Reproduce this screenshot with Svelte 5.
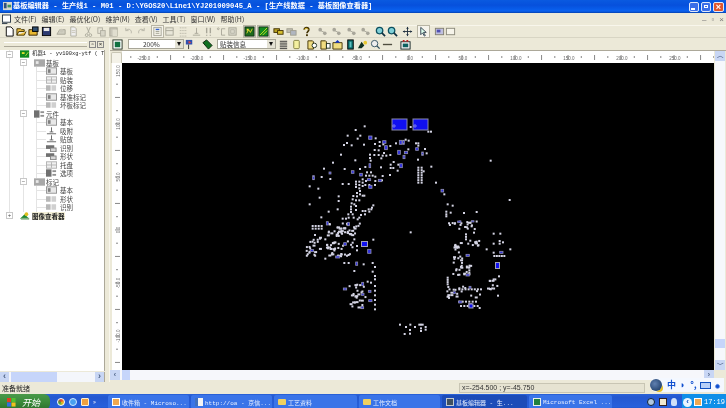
<script>
	// toolbar icon shapes, 12x12
	const shapes = {
		doc: '<path d="M2.5 1h5l2.5 2.500V11h-7.500z" fill="#fff" stroke="#000"/>',
		open: '<path d="M1 10V3h4l1 1h3v2H3l-2 4h8l2-4" fill="#f0c040" stroke="#403000"/>',
		saveall: '<path d="M1 10V4h3l1 1h5v5z" fill="#e8b830" stroke="#302000"/><rect x="5" y="1" width="6" height="5" fill="#305070" stroke="#000"/>',
		save: '<rect x="1.500" y="1.500" width="9" height="9" fill="#2c3a70" stroke="#000"/><rect x="3" y="2" width="6" height="3.500" fill="#e8e8e8"/>',
		gdoc: '<path d="M3 1h4l2 2v8H3z" fill="#eee" stroke="#b0aea0"/><path d="M4 5h4M4 7h4" stroke="#c8c6b8"/>',
		gprint: '<path d="M1 9l3-5h6v5z" fill="#d0cec0" stroke="#a8a698"/><circle cx="6" cy="5" r="2" fill="#c8c6b8"/>',
		gcut: '<path d="M4 1l3 7M8 1L5 8" stroke="#aaa89a"/><circle cx="4" cy="10" r="1.500" fill="none" stroke="#aaa89a"/><circle cx="8" cy="10" r="1.500" fill="none" stroke="#aaa89a"/>',
		gcopy: '<rect x="2" y="2" width="5" height="6" fill="#e8e6d8" stroke="#b0aea0"/><rect x="5" y="5" width="5" height="6" fill="#d8d6c8" stroke="#b0aea0"/>',
		gpaste: '<rect x="2" y="2" width="8" height="9" fill="#c8c6b8" stroke="#a8a698"/><rect x="5" y="4" width="5" height="7" fill="#e0decf"/>',
		gundo: '<path d="M3 5c3-3 7-1 6 3M3 2v3h3" fill="none" stroke="#b8b6a8"/>',
		gredo: '<path d="M9 5C6 2 2 4 3 8M9 2v3H6" fill="none" stroke="#b8b6a8"/>',
		panel: '<rect x="2" y="1.500" width="8" height="9" fill="#f4f2e8" stroke="#a8a698"/><rect x="4" y="3" width="4" height="1.500" fill="#3060d0"/><path d="M4 6h4M4 8h4" stroke="#a0a090"/>',
		gpanel: '<rect x="2" y="2" width="8" height="8" fill="#e8e6d8" stroke="#a8a698"/><path d="M2 5h8" stroke="#a8a698"/>',
		ggrid: '<path d="M2 2h8M2 5h8M2 8h8M2 11h8" stroke="#a8a698" stroke-dasharray="1 1"/>',
		gpin: '<path d="M6 2v6M2 10h8M4 8h4" stroke="#a8a698"/>',
		gbang: '<path d="M4 2v6M8 2v6M4 9.500v1M8 9.500v1" stroke="#a8a698" stroke-width="1.500"/>',
		gdeg: '<circle cx="2.500" cy="3" r="1" fill="none" stroke="#a8a698"/><path d="M10 3H6v7h4" fill="none" stroke="#a8a698"/>',
		gchip: '<rect x="2" y="2" width="8" height="8" fill="#dad8ca" stroke="#a8a698"/><path d="M4 4h4v4H4z" fill="none" stroke="#b8b6a8"/>',
		board: '<rect x="1" y="1" width="10" height="10" fill="#1c6a1c" stroke="#102810"/><path d="M3 8l2-4 2 3 2-4" fill="none" stroke="#e8d830"/><rect x="3" y="3" width="2" height="2" fill="#f0e040"/>',
		board2: '<rect x="1" y="1" width="10" height="10" fill="#148a20" stroke="#102810"/><path d="M2 10l8-8M5 10l5-5" stroke="#c8e020"/>',
		chips: '<rect x="1" y="3" width="6" height="4" fill="#b8a020" stroke="#403000"/><rect x="5" y="5" width="6" height="4" fill="#d8c030" stroke="#403000"/>',
		gchips: '<rect x="1" y="3" width="6" height="4" fill="#c0beb0" stroke="#a09e90"/><rect x="5" y="5" width="6" height="5" fill="#b0b6c0" stroke="#a09e90"/>',
		help: '<path d="M3.500 4c0-3 5-3 5 0 0 2-2 2-2 4" fill="none" stroke="#403000" stroke-width="1.800"/><rect x="5.500" y="9" width="2" height="2" fill="#403000"/><path d="M4 4c0-2 3-2 4 0" fill="none" stroke="#e8c830"/>',
		gcon: '<circle cx="3.500" cy="4" r="2" fill="#a8a69a"/><circle cx="8.500" cy="8" r="2" fill="#a8a69a"/><path d="M4 5l4 2" stroke="#a8a69a"/>',
		zoomin: '<circle cx="5" cy="5" r="3.500" fill="#80d0d8" stroke="#0c5060" stroke-width="1.400"/><path d="M7.500 7.500L11 11" stroke="#103040" stroke-width="1.800"/>',
		move: '<path d="M6 1v10M1 6h10" stroke="#203040"/><path d="M6 1L4.500 3h3zM6 11L4.500 9h3zM1 6l2-1.500v3zM11 6L9 4.500v3z" fill="#203040"/>',
		arrow: '<path d="M3 1.500v8l2-2 2 3.500 1-.6-2-3.400h3z" fill="#dfe" stroke="#304050"/>',
		rectblue: '<rect x="1.500" y="2.500" width="9" height="7" fill="#c0c0e0" stroke="#807e70"/><rect x="3" y="4" width="4" height="3" fill="#5050b0"/>',
		rect: '<rect x="1.500" y="2.500" width="9" height="7" fill="#f6f4ea" stroke="#8a887a"/>',
		film: '<rect x="1" y="1" width="10" height="10" fill="#fff" stroke="#203020"/><rect x="3" y="3" width="6" height="6" fill="#107040"/>',
		rows: '<path d="M2 2.500h8M2 4.500h8M2 6.500h8M2 8.500h8M2 10.500h8" stroke="#303030"/>',
		cyl: '<rect x="3" y="1.500" width="6" height="9" rx="1" fill="#f4f0a0" stroke="#807e40"/>',
		fold1: '<path d="M1 2h5l1 1v8H1z" fill="#f0dc80" stroke="#403000"/><circle cx="8" cy="7" r="2.500" fill="#fff" stroke="#203020"/>',
		fold2: '<path d="M1 2h5l1 1v8H1z" fill="#f0dc80" stroke="#403000"/><rect x="7" y="5" width="4" height="5" fill="#fff" stroke="#203020"/>',
		fold3: '<path d="M1 4h10v7H1z" fill="#f0dc80" stroke="#403000"/><path d="M6 1l3 3H3z" fill="#1030c0"/>',
		gem: '<rect x="3" y="1" width="6" height="10" fill="#0c7070" stroke="#000"/><rect x="5" y="3" width="2" height="6" fill="#60c0c0"/>',
		chip2: '<path d="M1 10l4-7 3 4-3 3z" fill="#103020"/><circle cx="9" cy="4" r="2" fill="#e8c830"/>',
		lens: '<circle cx="5" cy="5" r="3.500" fill="#eee" stroke="#305060"/><path d="M7.500 7.500l3 3" stroke="#305060" stroke-width="1.500"/>',
		dash: '<path d="M1 6h10" stroke="#504e40" stroke-width="1.500"/>',
		pick: '<rect x="1" y="3" width="10" height="8" fill="#f4f4f4" stroke="#102020"/><rect x="3" y="5" width="6" height="4" fill="#0c6060"/><path d="M3 1h2v2H3zM7 1h2v2H7z" fill="#c02020"/>',
		flag: '<path d="M2 1h7v5H2z" fill="#3050b0"/><path d="M5 2l3 2-3 1z" fill="#e04040"/><path d="M5 6v5" stroke="#2a2a2a"/>',
		chipgreen: '<path d="M1 4l4-3 6 6-4 4z" fill="#107020" stroke="#082008"/>'
	};

	// [icon, centre x]
	const row1 = [['doc',10],['open',22],['saveall',34],['save',47],['gprint',62],['gdoc',74],['gcut',89],['gcopy',102],['gpaste',114],['gundo',129],['gredo',142],['panel',158],['gpanel',170],['ggrid',184],['gpin',197],['gbang',209],['gdeg',222],['gchip',233],['board',250],['board2',264],['chips',279],['gchips',292],['help',307],['gcon',323],['gcon',337],['gcon',352],['gcon',366],['zoomin',381],['zoomin',393],['move',408],['arrow',424],['rectblue',440],['rect',451]];
	const row2 = [['rows',283],['cyl',296],['fold1',312],['fold2',325],['fold3',337],['gem',350],['chip2',362],['lens',375],['dash',387],['pick',405]];

	function gaps(list, start) {
		let prev = start;
		return list.map(([name, x]) => {
			const left = x - 6 - prev;
			prev = x + 6;
			return { name, left };
		});
	}
	const row1Items = gaps(row1, 0);
	const row2Items = gaps(row2, 275);

	const menus = ['文件(F)', '编辑(E)', '最优化(O)', '维护(M)', '查看(V)', '工具(T)', '窗口(W)', '帮助(H)'];

	const tree = [
		{ label: '机器1 - yv100xg-ytf ( T', level: 0, icon: 'board', open: true },
		{ label: '基板', level: 1, icon: 'g', open: true },
		{ label: '基板', level: 2, icon: 'a' },
		{ label: '贴装', level: 2, icon: 'b' },
		{ label: '位移', level: 2, icon: 'c' },
		{ label: '基准标记', level: 2, icon: 'a' },
		{ label: '坏板标记', level: 2, icon: 'c' },
		{ label: '元件', level: 1, icon: 'd', open: true },
		{ label: '基本', level: 2, icon: 'a' },
		{ label: '吸附', level: 2, icon: 'e' },
		{ label: '贴放', level: 2, icon: 'e' },
		{ label: '识别', level: 2, icon: 'f' },
		{ label: '形状', level: 2, icon: 'f' },
		{ label: '托盘', level: 2, icon: 'b' },
		{ label: '选项', level: 2, icon: 'd' },
		{ label: '标记', level: 1, icon: 'g', open: true },
		{ label: '基本', level: 2, icon: 'a' },
		{ label: '形状', level: 2, icon: 'c' },
		{ label: '识别', level: 2, icon: 'c' },
		{ label: '图像查看器', level: 0, icon: 'view', open: false, selected: true }
	];
	const treeIcons = {
		board: '<rect x="0" y="0" width="10" height="8" fill="#108a20"/><rect x="2" y="2" width="3" height="2" fill="#e0e030"/><path d="M6 6l3-4" stroke="#c0e040"/>',
		view: '<path d="M0 7l5-5 5 5z" fill="#208a30"/><circle cx="7" cy="2" r="2" fill="#e0c020"/><rect x="1" y="6" width="9" height="2" fill="#80b080"/>',
		g: '<rect x="0" y="0" width="12" height="8" fill="#a8a8a8"/><rect x="2" y="2" width="3" height="3" fill="#e8e8e8"/>',
		a: '<rect x=".5" y=".5" width="11" height="7" fill="#e8e8e8" stroke="#909090"/><rect x="2" y="2" width="3" height="4" fill="#808080"/>',
		b: '<rect x=".5" y=".5" width="11" height="7" fill="#f0f0f0" stroke="#b0b0b0"/><path d="M6 1v6M1 4h10" stroke="#b0b0b0"/>',
		c: '<rect x="0" y="1" width="5" height="6" fill="#b8b8b8"/><rect x="6" y="1" width="5" height="6" fill="#d0d0d0"/>',
		d: '<rect x="0" y="0" width="6" height="8" fill="#707070"/><rect x="7" y="1" width="4" height="2" fill="#909090"/><rect x="7" y="5" width="4" height="2" fill="#909090"/>',
		e: '<path d="M6 0v5M1 7h10M4 5h4" stroke="#606060"/>',
		f: '<rect x="0" y="1" width="9" height="4" fill="#707070"/><rect x="5" y="4" width="6" height="4" fill="#d8d8d8" stroke="#808080"/>'
	};

	// rulers, in page pixels
	const xLabels = [['-250.0',144],['-200.0',197],['-150.0',250],['-100.0',303],['-50.0',357],['0.0',410],['50.0',463],['100.0',516],['150.0',569],['200.0',622],['250.0',675]];
	const xTicks = [];
	for (let x = 130.8; x < 714; x += 13.25) xTicks.push(x);
	const yLabels = [['150.0',71],['100.0',124],['50.0',177],['0.0',230],['-50.0',283],['-100.0',336]];
	const yTicks = [];
	for (let y = 84.2; y < 370; y += 13.25) yTicks.push(y);

	// board pads: coordinates read from 3x crops
	const rnd = (() => {
		let s = 4711;
		return () => (s = (s * 16807) % 2147483647) / 2147483647;
	})();
	const pads = [];
	const pts = (str, ox, oy) => {
		str.split(' ').forEach((p) => {
			const [x, y] = p.split(',').map(Number);
			pads.push({ x: ox + x / 3, y: oy + y / 3, w: 2, h: 2 });
		});
	};
	const box = (x0, y0, x1, y1, n, oy) => {
		for (let i = 0; i < n; i++) {
			pads.push({
				x: 300 + (x0 + rnd() * (x1 - x0)) / 3,
				y: oy + (y0 + rnd() * (y1 - y0)) / 3,
				w: rnd() > 0.75 ? 3 : 2,
				h: 2
			});
		}
	};
	const line = (x0, y0, x1, y1, n, oy) => {
		for (let i = 0; i < n; i++) {
			const t = n > 1 ? i / (n - 1) : 0;
			pads.push({ x: 300 + (x0 + (x1 - x0) * t) / 3, y: oy + (y0 + (y1 - y0) * t) / 3, w: 2, h: 2 });
		}
	};
	pts('164,57 191,46 140,74 178,74 170,83 224,82 129,102 138,96 152,103 189,101 120,131 163,148 96,155 131,174 69,173 62,198 88,204 26,226 52,233 56,260 26,280 83,302 110,295 61,319 113,256 113,270 125,219 143,219 222,99 236,93 236,105 247,100 268,105 285,97 314,86 323,89 322,115 233,118 221,117 249,126 268,132 256,134 245,134 241,142 207,131 207,141 220,132 233,132 209,149 278,153 269,161 269,171 277,171 292,161 290,179 240,169 267,192 345,97 352,97 352,104 372,114 377,127 351,146 391,167 405,215 430,250 440,280 455,284 449,305 436,302 436,310 436,316 489,306 527,303 569,149 626,267 368,181 177,174 193,168 198,184 210,184 195,194 205,194 215,194 223,197 245,195 243,208 223,210 195,210 175,212 175,222 175,232 185,205 185,215 185,225 165,212 165,220 165,228 193,222 205,222 222,222 177,240 177,250 168,246 185,254 190,254 157,255 168,256 155,265 165,268 175,268 152,277 160,280 150,287 150,295 150,303 165,285 165,297 185,300 193,300 203,295 211,295 217,283 213,290 205,302 180,312 175,320 142,310 155,310 125,323 135,323 143,320 158,320 170,325 192,310 329,48 382,62 390,62', 300, 110);
	pts('42,42 73,55 217,56 160,55 168,75 168,88 160,150 73,113 130,126 143,126 188,130 215,126 222,138 215,152 222,165 222,175 200,182 210,185 297,311 315,318 328,311 342,318 327,327 327,338 311,339 355,311 360,311 365,311 360,322 360,330 374,318 374,326 329,34 519,35 578,38 598,38 578,68 596,60 596,68 606,64 557,85 628,85 578,95 594,166 591,224 536,261 505,140 505,148 505,155 490,160', 300, 220);
	line(352, 170, 352, 215, 7, 110);
	line(362, 170, 362, 215, 7, 110);
	line(35, 345, 62, 345, 4, 110);
	line(35, 353, 62, 353, 4, 110);
	box(80, 5, 180, 45, 42, 220);
	box(15, 50, 60, 105, 22, 220);
	box(75, 60, 105, 105, 20, 220);
	box(110, 60, 155, 110, 18, 220);
	box(145, 190, 195, 260, 28, 220);
	line(222, 195, 222, 265, 6, 220);
	line(495, 40, 495, 55, 3, 220);
	box(500, 55, 535, 75, 10, 220);
	box(440, 0, 530, 25, 20, 220);
	line(580, 105, 610, 105, 5, 220);
	box(455, 65, 480, 95, 12, 220);
	box(455, 100, 510, 165, 24, 220);
	box(560, 170, 590, 210, 12, 220);
	line(440, 170, 440, 190, 4, 220);
	box(435, 195, 540, 235, 20, 220);
	line(475, 205, 540, 205, 8, 220);
	line(480, 255, 530, 255, 6, 220);
	line(475, 242, 525, 242, 6, 220);

	const blues = [];
	const blue = (str, ox, oy) => {
		str.split(' ').forEach((p) => {
			const [x, y, w, h] = p.split(',').map(Number);
			blues.push({ x: ox + x / 3, y: oy + y / 3, w: w / 3, h: h / 3 });
		});
	};
	blue('206,78,10,10 248,92,10,8 254,107,8,12 298,91,8,12 308,91,5,12 293,121,8,12 313,124,10,7 309,136,6,10 299,161,8,12 347,113,8,8 365,126,5,10 207,161,5,12 154,182,8,8 179,190,8,8 202,206,10,6 235,208,10,7 206,226,10,9 38,197,5,12 87,186,6,6 423,238,8,8', 300, 110);
	blue('31,89,10,6 79,5,6,10 142,7,6,10 131,68,8,8 107,108,12,6 203,88,10,12 167,126,6,10 130,204,10,6 185,187,6,10 184,220,8,6 205,211,8,6 206,239,10,6 183,260,8,6 473,3,10,5 514,2,8,4 498,103,10,6 599,94,10,6 498,162,10,6 506,250,10,12 460,215,6,6 507,199,6,6 476,243,10,6', 300, 220);
</script>

<div class="screen">
	<div class="title">
		<svg class="title-icon" viewBox="0 0 10 10"><rect width="10" height="9" fill="#d8d8d0"/><rect x="1" y="1" width="3" height="6" fill="#305080"/><rect x="5" y="3" width="4" height="3" fill="#409060"/></svg>
		<span class="title-text">基板编辑器 - 生产线1 - M01 - D:\YGOS20\Line1\YJ201009045_A - [生产线数据 - 基板图像查看器]</span>
		<span class="win-btns">
			<span class="win-btn"><i class="min"></i></span>
			<span class="win-btn"><i class="max"></i></span>
			<span class="win-btn close">×</span>
		</span>
	</div>

	<div class="menubar">
		<svg class="menu-icon" viewBox="0 0 10 11"><rect x=".5" y=".5" width="9" height="8" fill="#fff" stroke="#203040"/><path d="M0 10h6" stroke="#203040"/></svg>
		{#each menus as m}
			<span class="menu-item">{m}</span>
		{/each}
		<span class="mdi"><span>–</span><span>▫</span><span>×</span></span>
	</div>

	<div class="toolbar">
		{#each row1Items as item}
			<svg class="tool" class:pressed={item.name === 'board' || item.name === 'arrow' || item.name === 'panel' || item.name === 'board2'} style="margin-left:{item.left}px" viewBox="0 0 12 12">{@html shapes[item.name]}</svg>
		{/each}
	</div>

	<div class="main">
		<aside class="side">
			<div class="side-head">
				<span class="grip"></span>
				<span class="mini">▫</span>
				<span class="mini">×</span>
			</div>
			<div class="tree">
				{#each tree as node, i}
					<div class="node lv{node.level}" class:last={i === tree.length - 1}>
						{#if node.level < 2}
							<span class="exp">{node.open ? '−' : '+'}</span>
						{/if}
						<svg class="node-icon" viewBox="0 0 12 8">{@html treeIcons[node.icon]}</svg>
						<span class="label" class:sel={node.selected}>{node.label}</span>
					</div>
				{/each}
			</div>
			<div class="side-scroll">
				<span class="arrow">‹</span>
				<span class="thumb"></span>
				<span class="arrow right">›</span>
			</div>
		</aside>

		<section class="work">
			<div class="toolbar two">
				<svg class="tool" style="margin-left:2px" viewBox="0 0 12 12">{@html shapes.film}</svg>
				<div class="combo zoom"><span>200%</span><b>▾</b></div>
				<svg class="tool" viewBox="0 0 12 12">{@html shapes.flag}</svg>
				<svg class="tool" style="margin-left:6px" viewBox="0 0 12 12">{@html shapes.chipgreen}</svg>
				<div class="combo info"><span>贴装信息</span><b>▾</b></div>
				{#each row2Items as item}
					<svg class="tool" style="margin-left:{item.left}px" viewBox="0 0 12 12">{@html shapes[item.name]}</svg>
				{/each}
			</div>

			<div class="pane">
				<div class="corner"></div>
				<svg class="hruler" viewBox="122 51 592 12">
					{#each xTicks as x, i}
						<line x1={x} x2={x} y1={i % 2 ? 55 : 56} y2={i % 2 ? 60 : 58} stroke="#555" stroke-width=".7" />
					{/each}
					{#each xLabels as [t, x]}
						<text x={x} y="60" text-anchor="middle" class="rtext">{t}</text>
					{/each}
				</svg>
				<svg class="vruler" viewBox="112 63 10 307">
					{#each yTicks as y, i}
						<line x1={i % 2 ? 115 : 116} x2={i % 2 ? 120 : 118} y1={y} y2={y} stroke="#555" stroke-width=".7" />
					{/each}
					{#each yLabels as [t, y]}
						<text transform="translate(120 {y}) rotate(-90)" text-anchor="middle" class="rtext">{t}</text>
					{/each}
				</svg>
				<svg class="board" viewBox="122 63 592 307">
					{#each pads as p}
						<rect x={p.x} y={p.y} width={p.w} height={p.h} fill="#d4d4e4" />
					{/each}
					{#each blues as b}
						<rect x={b.x} y={b.y} width={b.w} height={b.h} fill="#3030e0" stroke="#9090b0" stroke-width=".8" />
					{/each}
					<rect x="392" y="119" width="15" height="11" fill="#1010f0" stroke="#8a8aa8" />
					<rect x="413" y="119" width="15" height="11" fill="#1010f0" stroke="#8a8aa8" />
					<circle cx="394" cy="126" r="1.200" fill="none" stroke="#c0c0f0" stroke-width=".6" />
					<circle cx="415" cy="126" r="1.200" fill="none" stroke="#c0c0f0" stroke-width=".6" />
					<rect x="361.500" y="241.500" width="6" height="5" fill="#1010f0" stroke="#a0a0b8" />
					<rect x="495.500" y="262.500" width="4" height="6" fill="#1010f0" stroke="#a0a0b8" />
					<rect x="469" y="304" width="4" height="4" fill="#1010f0" stroke="#a0a0b8" />
				</svg>
				<div class="vscroll">
					<span class="sb-btn">︿</span>
					<span class="vthumb"></span>
					<span class="sb-btn down">﹀</span>
				</div>
				<div class="hscroll">
					<span class="sb-btn">‹</span>
					<span class="hthumb"></span>
					<span class="hfill"></span>
					<span class="sb-btn">›</span>
				</div>
			</div>
		</section>
	</div>

	<div class="status">
		<span class="status-text">准备就绪</span>
		<span class="coords">x=-254.500 ; y=-45.750</span>
		<div class="langbar">
			<span class="lang-logo"></span>
			<span class="lang">中</span>
			<span class="lang">◗</span>
			<span class="lang">°,</span>
			<svg class="kbd" viewBox="0 0 11 7"><rect x=".5" y=".5" width="10" height="6" fill="#b8d0f8" stroke="#1050c0"/></svg>
			<span class="lang gear">✹</span>
		</div>
	</div>

	<div class="taskbar">
		<div class="start">
			<svg class="flag" viewBox="0 0 10 10"><rect x="0" y="0" width="4.500" height="4.500" fill="#e04020"/><rect x="5" y="0" width="4.500" height="4.500" fill="#50c030"/><rect x="0" y="5" width="4.500" height="4.500" fill="#3070e0"/><rect x="5" y="5" width="4.500" height="4.500" fill="#f0c020"/></svg>
			<span>开始</span>
		</div>
		<div class="quick">
			<span class="q q1"></span><span class="q q2"></span><span class="q q3"></span><span class="more">»</span>
		</div>
		<div class="tasks">
			<span class="task w81"><i class="ti mail"></i>收件箱 - Microso...</span>
			<span class="task w81"><i class="ti page"></i>http://oa - 京信...</span>
			<span class="task w84"><i class="ti folder"></i>工艺资料</span>
			<span class="task w81"><i class="ti folder"></i>工作文档</span>
			<span class="task active"><i class="ti app"></i>基板编辑器 - 生...</span>
			<span class="task w84"><i class="ti xls"></i>Microsoft Excel ...</span>
		</div>
		<div class="tray-icons">
			<span class="dot blue"></span>
			<span class="dot card"></span>
			<span class="dot pc"></span>
		</div>
		<div class="tray">
			<span class="chev">‹</span>
			<span class="dot mail"></span>
			<span class="clock">17:19</span>
		</div>
	</div>
</div>

<style>
	:global(body) {
		margin: 0;
		overflow: hidden;
		background: #ece9d8;
	}

	.screen {
		width: 726px;
		height: 408px;
		display: flex;
		flex-direction: column;
		background: #ece9d8;
		font-family: "Noto Sans CJK SC", "Liberation Mono", monospace;
		font-size: 7px;
		color: #333;
		overflow: hidden;
		filter: blur(0.4px);
	}

	.title {
		height: 13px;
		display: flex;
		align-items: center;
		background: linear-gradient(#0a5ae0, #0650dc 40%, #0a62f0 85%, #0440b0);
		color: #fff;
		padding-left: 3px;
		flex: none;
	}
	.title-icon {
		width: 9px;
		height: 9px;
		margin-right: 1px;
	}
	.title-text {
		font-family: "Liberation Mono", "Noto Sans CJK SC", monospace;
		font-weight: 700;
		font-size: 7.200px;
		line-height: 13px;
		white-space: nowrap;
	}
	.win-btns {
		margin-left: auto;
		display: flex;
		gap: 1px;
		padding-right: 2px;
	}
	.win-btn {
		width: 10px;
		height: 10px;
		border: 1px solid #dfe8fa;
		border-radius: 2px;
		background: #3a6ee8;
		box-sizing: border-box;
		margin-left: 1px;
	}
	.win-btn.close {
		width: 11px;
		background: #e0552c;
		color: #fff;
		font: 700 9px/8px "Liberation Sans", sans-serif;
		text-align: center;
	}
	.win-btn i {
		display: block;
		background: #fff;
	}
	.win-btn .min {
		width: 4px;
		height: 2px;
		margin: 5px 0 0 1px;
	}
	.win-btn .max {
		width: 4px;
		height: 3px;
		margin: 2px 0 0 2px;
		border: 1px solid #fff;
		background: transparent;
		box-sizing: border-box;
	}

	.menubar {
		height: 13px;
		display: flex;
		align-items: center;
		gap: 5px;
		padding-left: 2px;
		flex: none;
		border-bottom: 1px solid #f8f6ec;
		box-sizing: border-box;
	}
	.menu-icon {
		width: 9px;
		height: 11px;
		margin-right: -2px;
	}
	.menu-item {
		font-size: 7px;
		line-height: 13px;
		white-space: nowrap;
	}
	.mdi {
		margin-left: auto;
		display: flex;
		gap: 5px;
		color: #777;
		padding-right: 2px;
		font: 8px "Liberation Sans", sans-serif;
	}

	.toolbar {
		height: 12px;
		display: flex;
		align-items: center;
		flex: none;
		border-bottom: 1px solid #d8d5c4;
		box-sizing: border-box;
	}
	.tool {
		width: 11px;
		height: 11px;
		flex: none;
		margin-right: 1px;
	}
	.tool.pressed {
		background: #f6f4ec;
		outline: 1px solid #b8b5a4;
	}

	.main {
		height: 344px;
		display: flex;
		flex: none;
	}

	.side {
		width: 110px;
		flex: none;
		display: flex;
		flex-direction: column;
		padding-right: 4px;
		box-sizing: border-box;
		border-right: 1px solid #f8f6ec;
	}
	.side-head {
		height: 12px;
		display: flex;
		align-items: center;
		gap: 1px;
		padding: 0 1px 0 4px;
		flex: none;
		box-sizing: border-box;
	}
	.grip {
		flex: 1;
		height: 3px;
		border-top: 1px solid #fff;
		border-bottom: 1px solid #aca899;
		margin-right: 1px;
	}
	.mini {
		width: 7px;
		height: 7px;
		border: 1px solid #888;
		box-sizing: border-box;
		font: 6px/5px "Liberation Sans", sans-serif;
		text-align: center;
		color: #222;
	}
	.tree {
		flex: 1;
		background: #fff;
		overflow: hidden;
		border-right: 1px solid #aca899;
	}
	.node {
		height: 8.500px;
		display: flex;
		align-items: center;
		white-space: nowrap;
		overflow: hidden;
	}
	.node.lv0 {
		padding-left: 6px;
		background: linear-gradient(#e4e4e4, #e4e4e4) 9px 0 / 1px 100% no-repeat;
	}
	.node.lv0.last {
		background: none;
	}
	.node.lv1 {
		padding-left: 20px;
		background:
			linear-gradient(#e4e4e4, #e4e4e4) 9px 0 / 1px 100% no-repeat,
			linear-gradient(#e4e4e4, #e4e4e4) 23px 0 / 1px 100% no-repeat;
	}
	.node.lv2 {
		padding-left: 46px;
		background:
			linear-gradient(#e4e4e4, #e4e4e4) 9px 0 / 1px 100% no-repeat,
			linear-gradient(#e4e4e4, #e4e4e4) 23px 0 / 1px 100% no-repeat,
			linear-gradient(#e4e4e4, #e4e4e4) 36px 0 / 1px 100% no-repeat,
			linear-gradient(#e4e4e4, #e4e4e4) 36px 4px / 10px 1px no-repeat;
	}
	.exp {
		width: 7px;
		height: 7px;
		border: 1px solid #c8c8c8;
		background: #fff;
		box-sizing: border-box;
		font: 6px/5px "Liberation Sans", sans-serif;
		text-align: center;
		color: #555;
		margin-right: 7px;
		flex: none;
	}
	.node-icon {
		width: 11px;
		height: 8px;
		flex: none;
		margin-right: 3px;
	}
	.node.lv0 .node-icon,
	.node.lv1 .node-icon {
		margin-right: 1px;
	}
	.label {
		font-size: 6.500px;
		line-height: 8px;
		color: #444;
	}
	.label.sel {
		background: #f4f0d8;
		color: #222;
		font-weight: 700;
	}
	.node.lv0 .label {
		color: #222;
		font-family: "Liberation Mono", "Noto Sans CJK SC", monospace;
		font-size: 5.400px;
	}
	.node.lv0 .label.sel {
		font-family: "Noto Sans CJK SC", sans-serif;
		font-size: 6.500px;
	}
	.side-scroll {
		height: 10px;
		flex: none;
		display: flex;
		background: #f4f6fb;
		margin-top: 1px;
		border-right: 1px solid #aca899;
	}
	.arrow {
		width: 9px;
		background: #c8d6f4;
		text-align: center;
		font: 700 9px/9px "Liberation Sans", sans-serif;
		color: #4d6185;
	}
	.thumb {
		width: 46px;
		margin-left: 2px;
		background: #c6d5fa;
	}
	.arrow.right {
		margin-left: auto;
	}

	.work {
		flex: 1;
		min-width: 0;
		display: flex;
		flex-direction: column;
	}
	.toolbar.two {
		border-bottom: 1px solid #aca899;
		height: 13px;
	}
	.combo {
		height: 10px;
		background: #fff;
		border: 1px solid #a8a698;
		box-sizing: border-box;
		display: flex;
		align-items: center;
		font-size: 6.500px;
	}
	.combo b {
		width: 8px;
		height: 8px;
		background: #e4e2d4;
		font: 8px/7px "Liberation Sans", sans-serif;
		text-align: center;
		color: #111;
		margin-left: auto;
	}
	.combo.zoom {
		width: 56px;
		margin-left: 4px;
	}
	.combo.zoom span {
		margin-left: 14px;
	}
	.combo.info {
		width: 59px;
		margin-left: 3px;
	}
	.combo.info span {
		margin-left: 2px;
	}

	.pane {
		display: grid;
		grid-template-columns: 12px 592px 12px;
		grid-template-rows: 12px 307px 11px;
		height: 330px;
		background: #ece9d8;
	}
	.corner {
		background: #f4f2e8;
		border: 1px solid #c8c5b4;
		border-bottom: 0;
		border-radius: 2px 2px 0 0;
		margin: 1px 0 0 1px;
		box-sizing: border-box;
	}
	.hruler {
		grid-column: 2;
		grid-row: 1;
		width: 592px;
		height: 12px;
		background: #fff;
		display: block;
	}
	.rtext {
		font: 4.500px "Liberation Sans", sans-serif;
		fill: #666;
	}
	.vruler {
		grid-column: 1;
		grid-row: 2;
		width: 10px;
		height: 307px;
		margin-left: 2px;
		background: #fff;
		display: block;
	}
	.board {
		grid-column: 2;
		grid-row: 2;
		width: 592px;
		height: 307px;
		background: #000;
		display: block;
	}
	.vscroll {
		grid-column: 3;
		grid-row: 1 / span 2;
		display: flex;
		flex-direction: column;
		width: 10px;
		margin-left: 1px;
		background: #f6f8fc;
	}
	.sb-btn {
		height: 10px;
		width: 10px;
		background: #c8d6f4;
		color: #4d6185;
		font: 700 7px/9px "Liberation Sans", sans-serif;
		text-align: center;
		flex: none;
	}
	.vthumb {
		height: 9px;
		margin: auto 0 12px;
		background: #c6d5fa;
	}
	.hscroll {
		grid-column: 1 / span 2;
		grid-row: 3;
		display: flex;
		background: #f6f7fb;
		height: 10px;
	}
	.hthumb {
		width: 8px;
		margin-left: 2px;
		background: #c6d5fa;
	}
	.hfill {
		flex: 1;
	}

	.status {
		height: 12px;
		flex: none;
		display: flex;
		align-items: center;
		position: relative;
	}
	.status-text {
		padding-left: 2px;
		font-size: 7px;
		color: #222;
	}
	.coords {
		position: absolute;
		left: 459px;
		width: 186px;
		height: 10px;
		bottom: 1px;
		background: #e6e3d2;
		border: 1px solid #c8c5b4;
		box-sizing: border-box;
		font: 7px/8px "Liberation Sans", sans-serif;
		padding-left: 2px;
		color: #333;
	}
	.langbar {
		position: absolute;
		left: 650px;
		right: 2px;
		top: -4px;
		height: 14px;
		display: flex;
		align-items: center;
		gap: 2px;
		background: #f4f8ff;
		color: #1050d0;
		font-weight: 700;
		font-size: 9px;
		border-radius: 7px 0 0 7px;
	}
	.lang-logo {
		width: 12px;
		height: 12px;
		border-radius: 50%;
		background: radial-gradient(circle at 40% 40%, #6080b0, #10305a);
		margin-right: 3px;
		box-shadow: 3px 3px 0 -2px #e8c020;
	}
	.lang {
		line-height: 12px;
		width: 9px;
		text-align: center;
	}
	.kbd {
		width: 11px;
		height: 7px;
	}
	.gear {
		font-size: 10px;
	}

	.taskbar {
		height: 16px;
		flex: none;
		display: flex;
		align-items: center;
		background: linear-gradient(#2a62d8, #2458d0 20%, #2760dc 80%, #1c48b0);
		color: #fff;
	}
	.start {
		width: 50px;
		height: 16px;
		background: linear-gradient(#4a9a4a, #3a8a3a 50%, #2c702c);
		border-radius: 0 6px 6px 0;
		display: flex;
		align-items: center;
		gap: 6px;
		padding-left: 7px;
		box-sizing: border-box;
		font-style: italic;
		font-size: 9px;
		flex: none;
	}
	.flag {
		width: 9px;
		height: 9px;
	}
	.quick {
		width: 58px;
		flex: none;
		display: flex;
		align-items: center;
		gap: 4px;
		padding-left: 7px;
		box-sizing: border-box;
	}
	.q {
		width: 8px;
		height: 8px;
		border-radius: 50%;
		flex: none;
	}
	.q1 {
		background: conic-gradient(#e04030, #f0c020, #40a040, #e04030);
		border: 1px solid #fff;
		box-sizing: border-box;
	}
	.q2 {
		background: #4aa0f0;
		border: 1px solid #d0e8ff;
		box-sizing: border-box;
	}
	.q3 {
		background: #f0a040;
		border-radius: 1px;
		border: 1px solid #fff0d0;
		box-sizing: border-box;
	}
	.more {
		font-size: 6px;
		line-height: 8px;
	}
	.tasks {
		display: flex;
		gap: 2px;
		flex: none;
	}
	.task {
		height: 14px;
		display: flex;
		align-items: center;
		gap: 2px;
		padding-left: 4px;
		box-sizing: border-box;
		background: #3a74e8;
		border-radius: 2px;
		white-space: nowrap;
		overflow: hidden;
		font: 6px "Liberation Mono", "Noto Sans CJK SC", monospace;
		color: #e8f0ff;
	}
	.w81 {
		width: 81px;
	}
	.w84 {
		width: 83px;
	}
	.task.active {
		width: 85px;
		background: #1c4cb8;
	}
	.ti {
		width: 8px;
		height: 8px;
		flex: none;
	}
	.ti.mail {
		background: #f0a850;
		border: 1px solid #fff;
		box-sizing: border-box;
	}
	.ti.page {
		background: #f4f4f4;
		border-left: 3px solid #4070c0;
		box-sizing: border-box;
	}
	.ti.folder {
		background: #f0d060;
		height: 6px;
		border-radius: 1px;
	}
	.ti.app {
		background: #405060;
		border: 1px solid #c0c8d0;
		box-sizing: border-box;
	}
	.ti.xls {
		background: #208040;
		border: 1px solid #e8f0e8;
		box-sizing: border-box;
	}
	.tray-icons {
		display: flex;
		gap: 4px;
		margin-left: auto;
		margin-right: 5px;
		align-items: center;
	}
	.dot {
		width: 8px;
		height: 8px;
		flex: none;
	}
	.dot.blue {
		background: #b0c8e0;
		border-radius: 50%;
		border: 1px solid #123;
		box-sizing: border-box;
	}
	.dot.card {
		background: #f0e8d0;
		border: 1px solid #322;
		box-sizing: border-box;
	}
	.dot.pc {
		background: #d0e0f8;
		border-radius: 50% 50% 2px 2px;
		width: 6px;
	}
	.tray {
		width: 44px;
		height: 16px;
		display: flex;
		align-items: center;
		gap: 2px;
		background: #0f8fe8;
		padding-left: 1px;
		box-sizing: border-box;
		flex: none;
	}
	.chev {
		width: 9px;
		height: 9px;
		border-radius: 50%;
		background: #e8f4ff;
		color: #1050c0;
		font: 700 8px/8px "Liberation Sans", sans-serif;
		text-align: center;
		flex: none;
	}
	.dot.mail {
		background: #f0a850;
		border: 1px solid #fff;
		box-sizing: border-box;
	}
	.clock {
		font: 7px "Liberation Mono", monospace;
	}
</style>
